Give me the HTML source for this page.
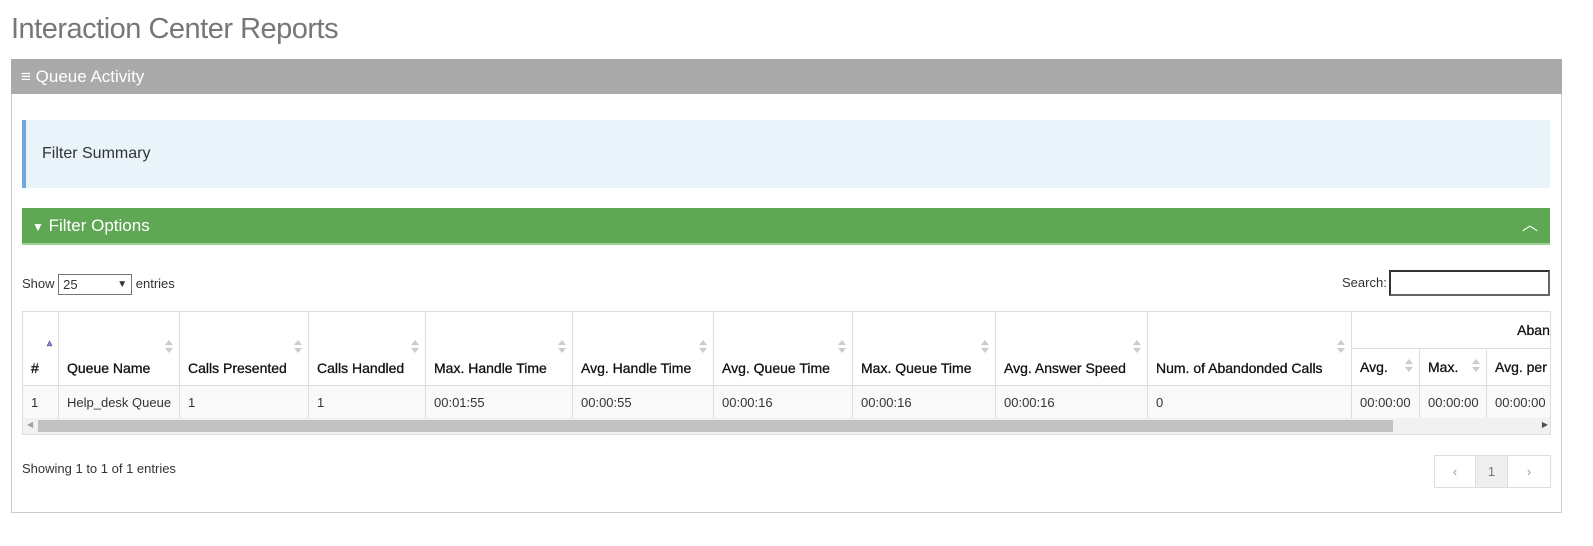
<!DOCTYPE html>
<html><head><meta charset="utf-8"><style>
*{box-sizing:border-box;margin:0;padding:0}
body{width:1593px;height:546px;background:#fff;font-family:"Liberation Sans",sans-serif;color:#333;position:relative;overflow:hidden;font-size:13px}
.a{position:absolute}
h1{position:absolute;left:11px;top:13px;font-size:29px;font-weight:normal;color:#777;letter-spacing:-0.5px}
.panel{left:11px;top:59px;width:1551px;height:454px;border:1px solid #ccc}
.ph{left:11px;top:59px;width:1551px;height:35px;background:#aaa;color:#fff;font-size:17px;line-height:35px;padding-left:10px}
.fs{left:22px;top:120px;width:1528px;height:68px;background:#e8f4fa;border-left:4px solid #6fa8dc;font-size:16px;line-height:68px;padding-left:16px;color:#333}
.fo{left:22px;top:208px;width:1528px;height:37px;background:#5fa754;border-bottom:2px solid #9ad290;color:#fff;font-size:17px;line-height:35px;padding-left:10px}
table{border-collapse:collapse;font-size:14px;table-layout:fixed}
td,th{border:1px solid #ddd;padding:0 8px;text-align:left;white-space:nowrap;overflow:hidden;position:relative}
th{font-weight:normal;color:#111;-webkit-text-stroke:0.3px #111}
.s::after{content:"";position:absolute;right:6px;top:28px;border:4px solid transparent;border-bottom:5px solid #ccc;border-top:none}
.s::before{content:"";position:absolute;right:6px;top:36px;border:4px solid transparent;border-top:5px solid #ccc;border-bottom:none}
.t::after{top:10px}.t::before{top:18px}
tr.d td{background:#f9f9f9;height:34px;font-size:13px}
</style></head><body>
<h1>Interaction Center Reports</h1>
<div class="a panel"></div>
<div class="a ph">≡ Queue Activity</div>
<div class="a fs">Filter Summary</div>
<div class="a fo"><span style="font-size:12px">▼</span> Filter Options<span class="a" style="right:12px;top:0;font-size:16px">︿</span></div>
<div class="a" style="left:22px;top:274px;font-size:13px">Show <span style="display:inline-block;width:74px;height:21px;border:1px solid #767676;vertical-align:middle;padding-left:4px;line-height:19px;position:relative">25<span style="position:absolute;right:4px;top:0;font-size:10px">▼</span></span> entries</div>
<div class="a" style="left:1342px;top:275px;font-size:13px">Search:</div>
<div class="a" style="left:1389px;top:270px;width:161px;height:26px;border:2px solid #333;border-right-color:#666;border-bottom-color:#666"></div>
<div class="a" style="left:22px;top:311px;width:1529px;height:124px;overflow:hidden;border:1px solid #ddd">
<table style="width:1600px;margin:-1px 0 0 -1px">
<colgroup><col style="width:36px"><col style="width:121px"><col style="width:129px"><col style="width:117px"><col style="width:147px"><col style="width:141px"><col style="width:139px"><col style="width:143px"><col style="width:152px"><col style="width:204px"><col style="width:68px"><col style="width:67px"><col style="width:136px"></colgroup>
<tr style="height:37px"><th rowspan="2" style="padding-top:38px;height:73px">#<span class="a" style="right:4px;top:26px;color:#8080e0;font-size:9px">▲</span></th><th rowspan="2" class="s" style="padding-top:38px">Queue Name</th><th rowspan="2" class="s" style="padding-top:38px">Calls Presented</th><th rowspan="2" class="s" style="padding-top:38px">Calls Handled</th><th rowspan="2" class="s" style="padding-top:38px">Max. Handle Time</th><th rowspan="2" class="s" style="padding-top:38px">Avg. Handle Time</th><th rowspan="2" class="s" style="padding-top:38px">Avg. Queue Time</th><th rowspan="2" class="s" style="padding-top:38px">Max. Queue Time</th><th rowspan="2" class="s" style="padding-top:38px">Avg. Answer Speed</th><th rowspan="2" class="s" style="padding-top:38px">Num. of Abandonded Calls</th><th colspan="3" style="text-align:center;padding-left:140px">Abandoned</th></tr>
<tr style="height:37px"><th class="s t">Avg.</th><th class="s t">Max.</th><th>Avg. per call</th></tr>
<tr class="d"><td>1</td><td>Help_desk Queue</td><td>1</td><td>1</td><td>00:01:55</td><td>00:00:55</td><td>00:00:16</td><td>00:00:16</td><td>00:00:16</td><td>0</td><td>00:00:00</td><td>00:00:00</td><td>00:00:00</td></tr>
</table>
<div class="a" style="left:0;top:106px;width:1529px;height:17px;background:#f1f1f1"><div class="a" style="left:15px;top:2px;width:1355px;height:12px;background:#c1c1c1"></div><span class="a" style="left:4px;top:2px;font-size:8px;color:#a0a0a0">◀</span><span class="a" style="right:4px;top:2px;font-size:8px;color:#505050">▶</span></div>
</div>
<div class="a" style="left:22px;top:461px;font-size:13px">Showing 1 to 1 of 1 entries</div>
<div class="a" style="left:1434px;top:455px;width:117px;height:33px;border:1px solid #ddd;display:flex;font-size:13px;color:#999;line-height:31px;text-align:center">
<div style="width:41px;border-right:1px solid #ddd">‹</div><div style="width:32px;border-right:1px solid #ddd;background:#eee;color:#777">1</div><div style="flex:1">›</div></div>
</body></html>
